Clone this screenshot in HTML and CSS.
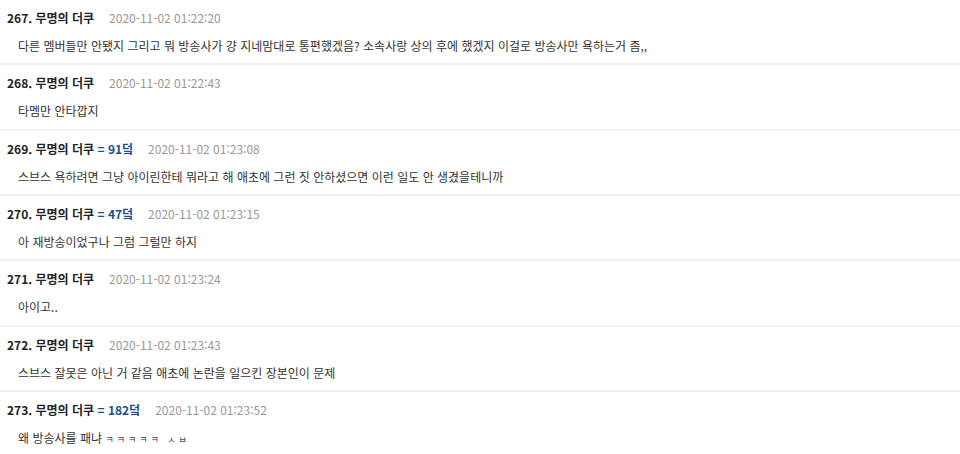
FILE: index.html
```html
<!DOCTYPE html>
<html lang="ko">
<head>
<meta charset="utf-8">
<link rel="stylesheet" href="styles.css">
</head>
<body>
<ul class="comments">
  <li class="comment">
    <div class="head"><span class="nick">267. 무명의 더쿠</span><span class="date">2020-11-02 01:22:20</span></div>
    <p class="body">다른 멤버들만 안됐지 그리고 뭐 방송사가 걍 지네맘대로 통편했겠음? 소속사랑 상의 후에 했겠지 이걸로 방송사만 욕하는거 좀,,</p>
  </li>
  <li class="comment">
    <div class="head"><span class="nick">268. 무명의 더쿠</span><span class="date">2020-11-02 01:22:43</span></div>
    <p class="body">타멤만 안타깝지</p>
  </li>
  <li class="comment">
    <div class="head"><span class="nick">269. 무명의 더쿠 <span class="dduk">= 91덬</span></span><span class="date">2020-11-02 01:23:08</span></div>
    <p class="body">스브스 욕하려면 그냥 아이린한테 뭐라고 해 애초에 그런 짓 안하셨으면 이런 일도 안 생겼을테니까</p>
  </li>
  <li class="comment">
    <div class="head"><span class="nick">270. 무명의 더쿠 <span class="dduk">= 47덬</span></span><span class="date">2020-11-02 01:23:15</span></div>
    <p class="body">아 재방송이었구나 그럼 그럴만 하지</p>
  </li>
  <li class="comment">
    <div class="head"><span class="nick">271. 무명의 더쿠</span><span class="date">2020-11-02 01:23:24</span></div>
    <p class="body">아이고..</p>
  </li>
  <li class="comment">
    <div class="head"><span class="nick">272. 무명의 더쿠</span><span class="date">2020-11-02 01:23:43</span></div>
    <p class="body">스브스 잘못은 아닌 거 같음 애초에 논란을 일으킨 장본인이 문제</p>
  </li>
  <li class="comment">
    <div class="head"><span class="nick">273. 무명의 더쿠 <span class="dduk">= 182덬</span></span><span class="date">2020-11-02 01:23:52</span></div>
    <p class="body">왜 방송사를 패냐 <span class="small">ㅋㅋㅋㅋㅋ ㅅㅂ</span></p>
  </li>
</ul>
</body>
</html>
```
FILE: styles.css
```css
html, body {
  margin: 0;
  padding: 0;
  background: #fff;
}
body {
  font-family: "Noto Sans CJK KR", "Noto Sans", sans-serif;
  color: #333;
  width: 960px;
  overflow: hidden;
}
.comments {
  list-style: none;
  margin: 0;
  padding: 0;
}
.comment {
  height: 65.33px;
  box-sizing: border-box;
  padding: 8px 7px 0 7px;
  border-bottom: 2px solid #f0f0f0;
}
.head {
  display: flex;
  align-items: baseline;
  height: 20px;
  line-height: 20px;
}
.nick {
  font-size: 12px;
  font-weight: bold;
  color: #222;
  white-space: pre;
}
.dduk {
  color: #1b4f8c;
}
.date {
  font-size: 12px;
  color: #999;
  margin-left: 15px;
}
.body {
  margin: 8px 0 0 11px;
  font-size: 12px;
  line-height: 20px;
  color: #333;
}
.small {
  font-size: 9px;
  letter-spacing: 3px;
  color: #444;
}
```
